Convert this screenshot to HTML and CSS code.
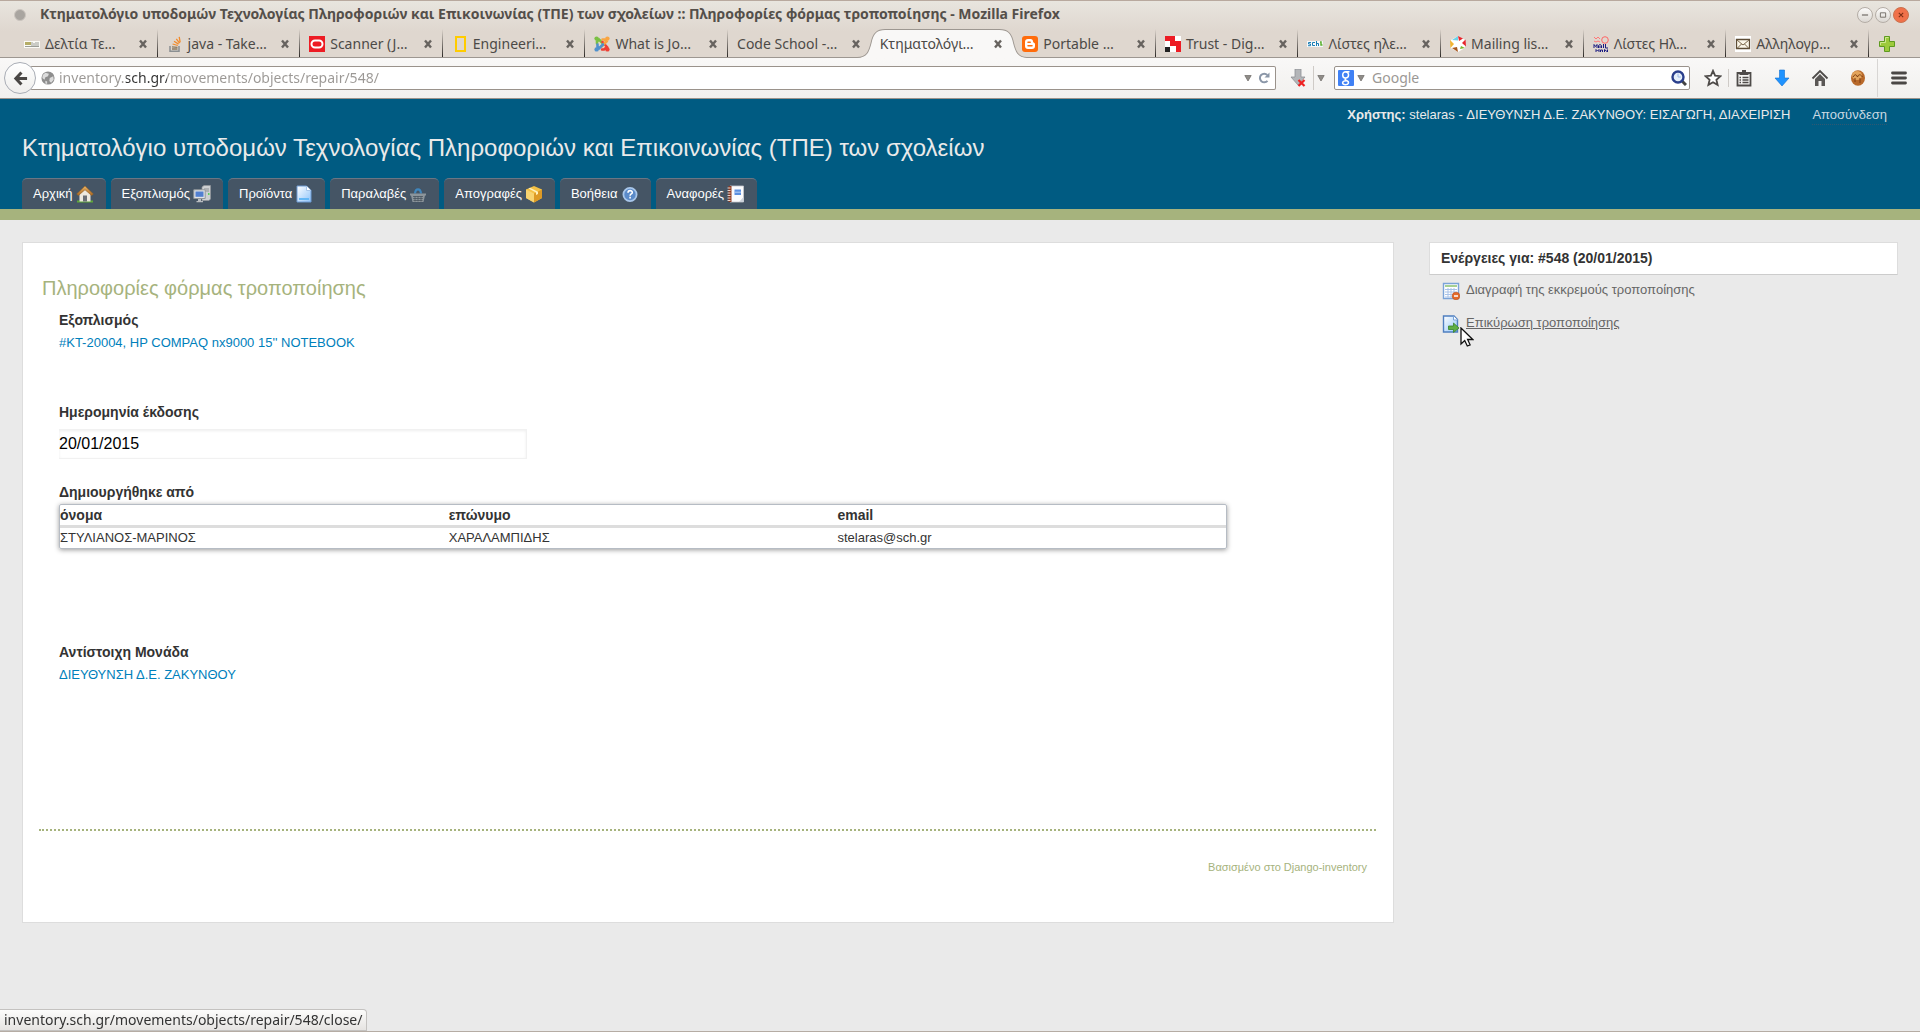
FILE: index.html
```html
<!DOCTYPE html>
<html lang="el">
<head>
<meta charset="utf-8">
<title>Κτηματολόγιο υποδομών Τεχνολογίας Πληροφοριών και Επικοινωνίας (ΤΠΕ) των σχολείων :: Πληροφορίες φόρμας τροποποίησης</title>
<link rel="stylesheet" href="styles.css">
</head>
<body>
<svg class="defs" aria-hidden="true">
  <defs>
    <symbol id="i-close" viewBox="0 0 10 10"><path d="M2 1.500 8 8.500M8 1.500 2 8.500" stroke="#67635f" stroke-width="2.400" fill="none"/></symbol>
    <symbol id="i-drop" viewBox="0 0 8 8"><path d="M.8 1.500h6.400L4 7z" fill="#8f8c88" stroke="#6b6865" stroke-width=".7"/></symbol>
    <linearGradient id="g-sheet" x1="0" y1="0" x2="1" y2="1"><stop offset="0" stop-color="#fff"/><stop offset="1" stop-color="#8fc4fa"/></linearGradient>
    <linearGradient id="g-roof" x1="0" y1="0" x2="0" y2="1"><stop offset="0" stop-color="#e9b568"/><stop offset="1" stop-color="#a8651f"/></linearGradient>
  </defs>
</svg>

<header class="chrome">
  <div class="titlebar">
    <span class="led"></span>
    <span class="wtitle">Κτηματολόγιο υποδομών Τεχνολογίας Πληροφοριών και Επικοινωνίας (ΤΠΕ) των σχολείων :: Πληροφορίες φόρμας τροποποίησης - Mozilla Firefox</span>
    <div class="wbuttons">
      <button class="wbtn" aria-label="Minimize"><svg viewBox="0 0 16 16"><path d="M4.500 8h7" stroke="#6a655f" stroke-width="1.300"/></svg></button>
      <button class="wbtn" aria-label="Maximize"><svg viewBox="0 0 16 16"><path d="M5 5.500h6v5H5z" stroke="#6a655f" fill="none"/></svg></button>
      <button class="wbtn wbtn-close" aria-label="Close"><svg viewBox="0 0 16 16"><path d="m5.500 5.500 5 5m0-5-5 5" stroke="#7a2d14" stroke-width="1.200"/></svg></button>
    </div>
  </div>

  <div class="tabs">
    <div class="tab"><svg class="ico" viewBox="0 0 16 16"><path fill="#fafaf5" d="M0 5h16v7H0z"/><path fill="#b5ad67" d="M1 6h6v3H1z"/><path stroke="#9b9d97" d="M1 10.500h14M8 6v4m2-3v3m2-4v4m2-4v4"/></svg><span class="tlabel">Δελτία Τε…</span><button class="x" aria-label="Close tab"><svg><use href="#i-close"/></svg></button></div>
    <div class="tab"><svg class="ico" viewBox="0 0 16 16"><path d="M3 10v5.200h9V10" fill="none" stroke="#8a8f92" stroke-width="1.500"/><path d="M5 13h5.500M5 10.800l5.500.6" stroke="#8a7a62" stroke-width="1.300"/><path d="m5.600 8 5.200 1.500M7 5.300l4.600 2.800M9.300 2.800l3.300 4.300M12.200.8l1 5.600" stroke="#f28b2c" stroke-width="1.300"/></svg><span class="tlabel">java - Take…</span><button class="x" aria-label="Close tab"><svg><use href="#i-close"/></svg></button></div>
    <div class="tab"><svg class="ico" viewBox="0 0 16 16"><path fill="#ed1c24" d="M0 0h16v16H0z"/><rect x="2.500" y="4.500" width="11" height="7" rx="3.500" fill="none" stroke="#fff" stroke-width="2"/></svg><span class="tlabel">Scanner (J…</span><button class="x" aria-label="Close tab"><svg><use href="#i-close"/></svg></button></div>
    <div class="tab"><svg class="ico" viewBox="0 0 16 16"><path d="M4 1h9v14H4z" fill="none" stroke="#fc0" stroke-width="2"/></svg><span class="tlabel">Engineeri…</span><button class="x" aria-label="Close tab"><svg><use href="#i-close"/></svg></button></div>
    <div class="tab"><svg class="ico" viewBox="0 0 16 16"><g fill="none" stroke-width="2.600" stroke-linecap="round"><path d="M3 7.500V5.500L5 3.500 10 8.500" stroke="#7ac043"/><path d="M7.500 13h2L12.500 10.500 8 5.500" stroke="#ee4035" transform="translate(.5 .5)"/><path d="M8.500 3.500h2L12.500 5.500 7.500 10.500" stroke="#f9a541"/><path d="M3.500 8.500v2.500L5 12.500 9 8.500" stroke="#5091cd"/></g><circle cx="2.600" cy="2.600" r="2.200" fill="#7ac043"/><circle cx="13.400" cy="2.600" r="2.200" fill="#f9a541"/><circle cx="2.600" cy="13.400" r="2.200" fill="#5091cd"/><circle cx="13.400" cy="13.400" r="2.200" fill="#ee4035"/></svg><span class="tlabel">What is Jo…</span><button class="x" aria-label="Close tab"><svg><use href="#i-close"/></svg></button></div>
    <div class="tab tab-plain"><span class="tlabel">Code School -…</span><button class="x" aria-label="Close tab"><svg><use href="#i-close"/></svg></button></div>
    <div class="tab tab-active"><svg class="shape" viewBox="0 0 170 29" preserveAspectRatio="none"><path d="M0 29V28.500C10 28.500 12 22 14 14 16 4 20 .5 28 .5H142C150 .5 154 4 156 14 158 22 160 28.500 170 28.500V29" fill="#f9f8f7" stroke="#9d9791"/></svg><span class="tlabel">Κτηματολόγι…</span><button class="x" aria-label="Close tab"><svg><use href="#i-close"/></svg></button></div>
    <div class="tab"><svg class="ico" viewBox="0 0 16 16"><rect width="16" height="16" rx="3" fill="#ff6c0c"/><path d="M6 3h2.500A2.500 2.500 0 0 1 11 5.500C11 7 13 6.500 13 8v2a3 3 0 0 1-3 3H6a3 3 0 0 1-3-3V6a3 3 0 0 1 3-3z" fill="#fff"/><path d="M6 6.200h2.200M6 9.800h4" stroke="#ff6c0c" stroke-width="1.500" stroke-linecap="round"/></svg><span class="tlabel">Portable …</span><button class="x" aria-label="Close tab"><svg><use href="#i-close"/></svg></button></div>
    <div class="tab"><svg class="ico" viewBox="0 0 16 16"><path fill="#fff" d="M0 0h16v16H0z"/><path fill="#ed1c24" d="M0 0h10v5h6v11h-5v-6H5V5H0z"/><path fill="#222" d="M0 11h5v5H0z"/></svg><span class="tlabel">Trust - Dig…</span><button class="x" aria-label="Close tab"><svg><use href="#i-close"/></svg></button></div>
    <div class="tab"><svg class="ico" viewBox="0 0 16 16"><path fill="#f6f8f9" d="M0 5h16v6H0z"/><path d="M4 6.500H1.500v1.500H3.500v1.700H1M8 6.500H5.500v3H8M9.500 5v5m0-2.500h2V10" stroke="#1a7eb5" fill="none"/><path d="M13 6h1v3h1.500" stroke="#5bb030" stroke-width="1.500" fill="none"/></svg><span class="tlabel">Λίστες ηλε…</span><button class="x" aria-label="Close tab"><svg><use href="#i-close"/></svg></button></div>
    <div class="tab"><svg class="ico" viewBox="0 0 16 16"><path fill="#fff" d="m8 0 7 4v8l-7 4-7-4V4z"/><path fill="#e8262e" d="m8 0 5 2.500L9 5z"/><path fill="#6cd3e8" d="M8 0v4.500L2 4z"/><path fill="#f3b431" d="m0 4 4 4-3.500 4z"/><path fill="#e8262e" d="m15.500 3.500.5 7L12 7z"/><path fill="#7ab82e" d="m15 12-5 1 1-3z"/><path fill="#a8561c" d="m2 12 5-1 1 5z"/></svg><span class="tlabel">Mailing lis…</span><button class="x" aria-label="Close tab"><svg><use href="#i-close"/></svg></button></div>
    <div class="tab"><svg class="ico" viewBox="0 0 16 16" fill="none"><path d="m1 1 2 2 2-2 2 2M1 5l2 1 2-1 2 1" stroke="#f77"/><circle cx="12" cy="4" r="3.300" stroke="#f66"/><path d="M1 12V8.500l1.500 2L4 8.500V12m1.500 0V9.500L7 8.500l1.500 1V12m-3-1h3M10.500 8v4m2-4v4H15M3 16v-2.500l1.500 1.500L6 13.500V16m1.500 0v-2h2v2m2 0v-2.500l3 2.500v-2.500" stroke="#1a1a80"/></svg><span class="tlabel">Λίστες Ηλ…</span><button class="x" aria-label="Close tab"><svg><use href="#i-close"/></svg></button></div>
    <div class="tab"><svg class="ico" viewBox="0 0 16 16"><path fill="#fff" d="M0 0h16v16H0z"/><path d="M1.500 3.500h13v9h-13z" fill="#fbf6e8" stroke="#5d4c35" stroke-width="1.300"/><path d="m2 4 6 5 6-5M2 12.500 6.500 8M14 12.500 9.500 8" stroke="#7a664a" fill="none"/></svg><span class="tlabel">Αλληλογρ…</span><button class="x" aria-label="Close tab"><svg><use href="#i-close"/></svg></button></div>
    <button class="newtab" aria-label="New tab"><svg class="ico" viewBox="0 0 16 16"><path d="M5.500.5h5v5h5v5h-5v5h-5v-5h-5v-5h5z" fill="#9dca3c" stroke="#5e9a20"/><path d="M6.500 6.500v-5h3M1.500 9V6.500h5" stroke="#cfe990" fill="none"/></svg></button>
  </div>

  <div class="toolbar">
    <button class="back" aria-label="Back"><svg viewBox="0 0 16 16"><path d="M9 1.500 3 8l6 6.500M3.500 8H15" stroke="#4a4745" stroke-width="3.200" fill="none"/></svg></button>
    <div class="urlbar">
      <svg class="globe" viewBox="0 0 16 16"><circle cx="8" cy="8" r="7.500" fill="#8e8e8e"/><path d="M2 4.500 5 2l4 1-1 3-3 1-1 3-2.500-2zM10 8l4-2 .5 4-3 3.500-2-2zM5 11l2 1v2.500H5z" fill="#dcdcdc"/></svg>
      <input class="url" type="text" value="inventory.sch.gr/movements/objects/repair/548/" aria-label="Address">
      <svg class="drop"><use href="#i-drop"/></svg>
      <button class="plain" aria-label="Reload"><svg class="ico12" viewBox="0 0 12 12"><path d="M9.500 8.800A4.300 4.300 0 1 1 9.300 3" fill="none" stroke="#8b97a8" stroke-width="2"/><path d="M11.500.5v5h-5z" fill="#8b97a8"/></svg></button>
    </div>
    <button class="plain dl" aria-label="Downloads"><svg class="ico18" viewBox="0 0 18 18"><path d="M6 0h6v8h4l-7 8-7-8h4z" fill="#b3b5b8" stroke="#8e9094" stroke-width=".8"/><path d="m9.500 11 6 6m0-6-6 6" stroke="#e22" stroke-width="2.200"/></svg></button>
    <button class="plain dropbtn" aria-label="More"><svg class="drop"><use href="#i-drop"/></svg></button>
    <div class="search">
      <svg class="ico" viewBox="0 0 16 16"><rect width="16" height="16" rx="1" fill="#4081f5"/><path d="M11.500 1.800H7.800C3.500 1.800 4 8 7.500 8c4 0 4-6 .3-6M8 8c-1.500.8-1 1.800.4 2.500 3.600 1.600 2 4.200-.9 4.200-4 0-4-4 1-4" fill="none" stroke="#fff" stroke-width="1.500"/></svg>
      <svg class="drop"><use href="#i-drop"/></svg>
      <input class="q" type="text" placeholder="Google" aria-label="Search">
      <button class="plain" aria-label="Go"><svg class="ico" viewBox="0 0 16 16"><path d="m11 11 4 4" stroke="#444" stroke-width="3"/><circle cx="7" cy="7" r="5.500" fill="#e5effa" stroke="#2a3f8c" stroke-width="2.400"/><path d="M7 3.500V7h3" stroke="#9db8e6" fill="none"/></svg></button>
    </div>
    <div class="tools">
      <button class="plain" aria-label="Bookmark"><svg class="ico18" viewBox="0 0 18 18"><path d="m9 1.800 2.100 4.900 5.300.5-4 3.500 1.200 5.200L9 13.200l-4.600 2.700 1.200-5.200-4-3.500 5.300-.5z" fill="#fff" stroke="#4e4b49" stroke-width="1.800"/></svg></button>
      <span class="vsep"></span>
      <button class="plain" aria-label="Bookmarks list"><svg class="ico18" viewBox="0 0 18 18"><path d="M2.500 4h13v12.500h-13z" fill="none" stroke="#4e4b49" stroke-width="1.800"/><path d="M4.500 3h2.500V1h4v2h2.500v3h-9z" fill="#4e4b49"/><path d="M4.500 8.500H6M7.500 8.500h6M4.500 11H6m1.500 0h6M4.500 13.500H6m1.500 0h6" stroke="#4e4b49" stroke-width="1.300"/></svg></button>
      <button class="plain" aria-label="Download progress"><svg class="ico18" viewBox="0 0 18 18"><path d="M6.500 1h5v8h4.500L9 17 2 9h4.500z" fill="#1f93ff" stroke="#0f6fd0" stroke-width=".6"/></svg></button>
      <button class="plain" aria-label="Home"><svg class="ico18" viewBox="0 0 18 18"><path d="M1.500 9.500 9 2l7.500 7.500" fill="none" stroke="#4e4b49" stroke-width="1.800"/><path d="M4 10 9 5l5 5v7h-3.500v-5h-3v5H4z" fill="#5a5755"/></svg></button>
      <button class="plain" aria-label="Cookies"><svg class="ico18" viewBox="0 0 18 18"><ellipse cx="9" cy="9" rx="7" ry="7.800" fill="#b8692a"/><ellipse cx="8" cy="6.500" rx="5" ry="4.500" fill="#e3a45c"/><path d="M4 8c2-3 3-3 4.500 0 1-3 3-3 5 0M6 13V9m5 5V9" stroke="#7d3d10" fill="none"/></svg></button>
      <span class="vsep vsep-tall"></span>
      <button class="plain" aria-label="Menu"><svg class="ico18" viewBox="0 0 18 18"><path d="M2.500 4h13M2.500 9h13M2.500 14h13" stroke="#4a4745" stroke-width="2.800" stroke-linecap="round"/></svg></button>
    </div>
  </div>
</header>

<div class="site-head">
  <p class="user"><span><b>Χρήστης:</b> stelaras - ΔΙΕΥΘΥΝΣΗ Δ.Ε. ΖΑΚΥΝΘΟΥ: ΕΙΣΑΓΩΓΗ, ΔΙΑΧΕΙΡΙΣΗ</span><a class="logout" href="#">Αποσύνδεση</a></p>
  <h1>Κτηματολόγιο υποδομών Τεχνολογίας Πληροφοριών και Επικοινωνίας (ΤΠΕ) των σχολείων</h1>
  <nav class="menu">
    <a href="#">Αρχική<svg class="mico" viewBox="0 0 18 18"><path d="M1 15.500h16v2H1z" fill="#5fa83a"/><path d="M3.500 9 9 4l5.500 5v7.500h-11z" fill="#eee9df"/><path d="M7 10.500h4v6H7z" fill="#6b6f76"/><path d="m9 1 8.300 8-1.700 1.500L9 4.800 2.400 10.500.7 9z" fill="url(#g-roof)" stroke="#9a6425" stroke-width=".6"/></svg></a>
    <a href="#">Εξοπλισμός<svg class="mico" viewBox="0 0 18 18"><path d="m9 2 2-1.500h6.500V14L16 15.500H9z" fill="#cdd0d2" stroke="#92979b" stroke-width=".7"/><path d="M11 4h5m-5 2h5" stroke="#8b9094"/><path d="M15 9h1.500" stroke="#3c3" stroke-width="1.600"/><path d="M.8 4.800h11.400v8.700H.8z" fill="#dfe2e5" stroke="#92979b"/><path d="M2.500 6.500h8v5.300h-8z" fill="#517fd0"/><path d="M5 14h3v2h2v1.200H3.500V16H5z" fill="#b8bcc0"/></svg></a>
    <a href="#">Προϊόντα<svg class="mico" viewBox="0 0 18 18"><path d="M2 1h9.500L16 5.500V17H2z" fill="url(#g-sheet)" stroke="#6d9bd4"/><path d="M11.500 1v4.500H16" fill="#fff" stroke="#a7c6ea"/><path d="M4 14h10" stroke="#65b8f6" stroke-width="2"/></svg></a>
    <a href="#">Παραλαβές<svg class="mico" viewBox="0 0 18 18"><path d="M6 8.500C6.500 3 11.500 3 12 8.500" stroke="#3f86bd" stroke-width="2.200" fill="none"/><path d="M1 8.500h16v2H16L14.500 17h-11L2 10.500H1z" fill="#8c959b"/><path d="M4 11.500h10M4.200 13.500h9.600M4.500 15.500h9M6 11v5.500M9 11v5.500m3-5.500v5.500" stroke="#4a5660" stroke-width=".8"/></svg></a>
    <a href="#">Απογραφές<svg class="mico" viewBox="0 0 18 18"><path d="m9 1 8 3.500V13l-8 4.500L1 13V4.500z" fill="#f4c144"/><path d="m1 4.500 8 4v9L1 13z" fill="#f8d470"/><path d="m9 8.500 8-4V13l-8 4.500z" fill="#dd9a25"/><path d="m5 2.800 8 4V9l-2 1V7.600L3.500 3.500z" fill="#fff1bd"/></svg></a>
    <a href="#">Βοήθεια<svg class="mico" viewBox="0 0 18 18"><circle cx="9" cy="9.500" r="6.600" fill="#5b8bc9" stroke="#a9c7ea" stroke-width="1.800"/><path d="M7 7.800c0-2.800 4.300-2.800 4.300-.4 0 1.600-2.200 1.500-2.200 3.300M9.100 11.700v1.700" stroke="#fff" stroke-width="1.600" fill="none"/></svg></a>
    <a href="#">Αναφορές<svg class="mico" viewBox="0 0 18 18"><path d="M3 1h13.500v16H3z" fill="#fbfbfd" stroke="#c6c8ce" stroke-width=".8"/><path d="M1.500 1h3v16h-3z" fill="#8f3b22"/><path d="M.5 3h3m-3 2.500h3M.5 8h3m-3 2.500h3M.5 13h3m-3 2.500h3" stroke="#e3d2ca"/><path d="M7.500 4.500h6.500V10H7.500z" fill="#5b8fe0"/><path d="M7.500 7.200H14" stroke="#b9d0f4"/><path d="m12 17 4.500-5v5z" fill="#cdd3dc"/></svg></a>
  </nav>
</div>

<div class="content">
  <main class="card">
    <h2>Πληροφορίες φόρμας τροποποίησης</h2>
    <div class="fields">
      <section class="field field-wide">
        <h3>Εξοπλισμός</h3>
        <a href="#">#KT-20004, HP COMPAQ nx9000 15'' NOTEBOOK</a>
      </section>
      <section class="field field-date">
        <label for="issued">Ημερομηνία έκδοσης</label>
        <input id="issued" type="text" value="20/01/2015">
      </section>
      <section class="field field-table">
        <h3>Δημιουργήθηκε από</h3>
        <table>
          <thead><tr><th>όνομα</th><th>επώνυμο</th><th>email</th></tr></thead>
          <tbody><tr><td>ΣΤΥΛΙΑΝΟΣ-ΜΑΡΙΝΟΣ</td><td>ΧΑΡΑΛΑΜΠΙΔΗΣ</td><td>stelaras@sch.gr</td></tr></tbody>
        </table>
      </section>
      <section class="field field-unit">
        <h3>Αντίστοιχη Μονάδα</h3>
        <a href="#">ΔΙΕΥΘΥΝΣΗ Δ.Ε. ΖΑΚΥΝΘΟΥ</a>
      </section>
    </div>
    <footer class="foot">Βασισμένο στο Django-inventory</footer>
  </main>

  <aside class="side">
    <h3 class="side-head">Ενέργειες για: #548 (20/01/2015)</h3>
    <ul>
      <li><a href="#"><svg class="sico" viewBox="0 0 18 18"><path d="M1.500 1.500h15v15h-15z" fill="#fff" stroke="#7ba4d8" stroke-width="1.400"/><path d="M3 4h12" stroke="#9ccb86" stroke-width="1.800"/><path d="M3 7.500h12m-12 2.500h12M3 12.500h9M3 15h9M6 6v9.500M9 6v9.500m3-9.500v8" stroke="#a9c3e8"/><circle cx="14" cy="14" r="3.800" fill="#e4692a" stroke="#b94d17" stroke-width=".6"/><path d="M12 14h4" stroke="#fff" stroke-width="1.500"/></svg><span>Διαγραφή της εκκρεμούς τροποποίησης</span></a></li>
      <li><a class="hovered" href="#"><svg class="sico" viewBox="0 0 18 18"><path d="M1.500 1H12L15.500 4.500v12.500h-14z" fill="url(#g-sheet)" stroke="#4f7fc0" stroke-width="1.400"/><path d="M11.500 1v4h4" fill="#fff" stroke="#7ba4d8"/><path d="M6.500 11h5V8l5.500 5-5.500 4.500v-3h-5z" fill="#5fae45" stroke="#39842a" stroke-width=".8"/></svg><span>Επικύρωση τροποποίησης</span></a><svg class="pointer" viewBox="0 0 14 20"><path d="M1 1v16l3.700-3.500L7.300 19l2.800-1.200L7.600 12.500h5.200z" fill="#fff" stroke="#111" stroke-width="1.300"/></svg></li>
    </ul>
  </aside>
</div>

<div class="status">inventory.sch.gr/movements/objects/repair/548/close/</div>
</body>
</html>
```
FILE: styles.css
```css
* { box-sizing: border-box; }

body {
  margin: 0;
  min-height: 100vh;
  background: #eaeaea;
  border-bottom: 1px solid #b5aca4;
  color: #333;
  font: 13px/18px "Liberation Sans", Arial, sans-serif;
}

h1, h2, h3, p, ul { margin: 0; padding: 0; font-weight: normal; }
ul { list-style: none; }
a { color: #0080bb; text-decoration: none; }
svg { display: block; flex: none; }
button { padding: 0; border: 0; background: none; flex: none; }
.defs { position: absolute; width: 0; height: 0; }

/* Browser window */
.chrome {
  background: linear-gradient(#e8e5de, #dfd7cf 30px);
  border-top: 1px solid #b8a99e;
  border-bottom: 1px solid #9a928b;
  color: #4c4a47;
  font: 14px/20px "Noto Sans", "Open Sans", sans-serif;
}

.titlebar {
  display: flex;
  align-items: center;
  height: 28px;
  padding: 0 11px 0 14px;
}
.led {
  width: 12px;
  height: 12px;
  margin-right: 14px;
  border: 1px solid #cbc5bf;
  border-radius: 50%;
  background: #a9a5a0;
}
.wtitle { flex: 1; padding-bottom: 2px; font-weight: bold; color: #544f4a; white-space: nowrap; overflow: hidden; }
.wbuttons { display: flex; gap: 2px; }
.wbtn {
  width: 16px;
  height: 16px;
  border: 1px solid #b4ada6;
  border-radius: 50%;
  background: linear-gradient(#fbfaf9, #dcd8d3);
}
.wbtn svg { width: 14px; height: 14px; }
.wbtn-close { background: #f0714a; border-color: #c9724f; }

.tabs {
  display: flex;
  height: 29px;
  padding-left: 15px;
  border-bottom: 1px solid #9d9791;
}
.tab {
  position: relative;
  flex: 1;
  min-width: 0;
  display: flex;
  align-items: center;
  gap: 5px;
  padding: 2px 10px 0 9px;
  background: linear-gradient(transparent, #2b2825) right / 1px 100% no-repeat;
}
.tab-plain, .tab-active { background: none; }
.shape { position: absolute; left: -14px; right: -14px; top: 0; width: calc(100% + 28px); height: 29px; }
.tlabel { position: relative; flex: 1; white-space: nowrap; }
.x { position: relative; width: 10px; height: 10px; }
.x svg { width: 10px; height: 10px; }
.ico { width: 16px; height: 16px; }
.ico12 { width: 12px; height: 12px; }
.ico18 { width: 18px; height: 18px; }
.drop { width: 8px; height: 8px; }
.newtab { width: 51px; padding: 2px 0 0 10px; }

.toolbar {
  display: flex;
  align-items: center;
  height: 40px;
  padding: 0 12px 0 4px;
  background: linear-gradient(#f9f8f7, #f1f0ee);
}
.back {
  position: relative;
  display: grid;
  place-items: center;
  width: 32px;
  height: 32px;
  border: 1px solid #a9adb5;
  border-radius: 50%;
  background: linear-gradient(#fff, #efeeec);
}
.back svg { width: 15px; height: 15px; }
.urlbar, .search {
  display: flex;
  align-items: center;
  height: 24px;
  border: 1px solid #9a928b;
  border-radius: 2px;
  background: #fff;
}
.urlbar { flex: 1; margin-left: -6px; padding: 0 5px 0 11px; gap: 6px; border-left: 0; }
.globe { width: 14px; height: 14px; }
.url, .q {
  flex: 1;
  min-width: 0;
  padding: 0;
  border: 0;
  outline: 0;
  font: inherit;
}
.url {
  margin-left: -2px;
  color: transparent;
  background: linear-gradient(90deg, #9b9895 67px, #333 67px 108px, #9b9895 108px) text;
}
.q { margin-left: 4px; background: none; color: #333; }
.q::placeholder { color: #9b9895; opacity: 1; }
.dl { margin: 0 6px 0 13px; }
.dropbtn { padding: 8px 9px 8px 3px; border-left: 1px solid #cfcbc7; }
.search { width: 356px; padding: 0 2px 0 3px; gap: 3px; }
.tools { display: flex; align-items: center; gap: 20px; padding-left: 14px; }
.vsep { width: 1px; height: 18px; margin: 0 -14px 0 -14px; background: #cfcbc7; }
.vsep-tall { height: 38px; margin: 0 -8px 0 -10px; background: #d8d6d4; }

/* Site header */
.site-head {
  padding: 7px 22px 0;
  background: #005b82;
  border-bottom: 11px solid #a6b37d;
  color: #eaeaea;
}
.user { display: flex; justify-content: flex-end; gap: 22px; padding-right: 11px; }
.logout { color: #c9d9e2; border-bottom: 1px dotted #2f5872; }
h1 { margin-top: 8px; font-size: 24px; line-height: 30px; }
.menu { display: flex; gap: 5px; margin-top: 15px; }
.menu a {
  display: flex;
  align-items: center;
  gap: 3px;
  height: 31px;
  padding: 0 12px 0 11px;
  border-top: 1px solid #6a7684;
  border-radius: 5px 5px 0 0;
  background: #455565;
  color: #fff;
}
.mico { width: 18px; height: 18px; }

/* Page body */
.content {
  display: grid;
  grid-template-columns: 1372fr 469fr;
  gap: 35px;
  align-items: start;
  padding: 22px 22px 0;
}
.card { padding: 33px 17px 46px 16px; background: #fff; border: 1px solid #ddd; }
h2 { padding-left: 3px; color: #a6b37d; font-size: 20px; line-height: 24px; }
.fields { padding: 10px 0 0 20px; }
h3, label { display: block; font-size: 14px; line-height: 20px; font-weight: bold; }
.field > a { display: block; padding-top: 1px; line-height: 24px; }
.field-wide { min-height: 92px; }
.field-date { min-height: 80px; }
.field-table { min-height: 160px; }
.field-unit { min-height: 187px; }
.field-date input {
  display: block;
  width: 35.5%;
  height: 30px;
  margin-top: 7px;
  padding: 0;
  border: 1px solid #f1f1f1;
  border-left: 0;
  box-shadow: inset 0 1px 3px #eee;
  background: #fff;
  color: #000;
  font: 16px "Liberation Sans", Arial, sans-serif;
}
table {
  width: 88.7%;
  margin-top: 2px;
  table-layout: fixed;
  border-spacing: 0;
  border: 1px solid #b6bcc4;
  border-radius: 2px;
  box-shadow: 0 1px 5px #999;
}
th, td { padding: 0; text-align: left; line-height: 20px; }
th { font-size: 14px; border-bottom: 3px solid #ddd; }
.foot {
  padding: 27px 9px 0 0;
  border-top: 2px dotted #a6b37d;
  color: #a6b37d;
  font-size: 11px;
  text-align: right;
}

.side-head { padding: 5px 11px 6px; background: #fff; border: 1px solid #ddd; border-bottom-color: #ccc; }
.side ul { padding: 5px 0 0 13px; display: grid; gap: 11px; }
.side li { position: relative; }
.side a { display: flex; align-items: center; gap: 6px; color: #666; line-height: 22px; }
.side a span { padding-bottom: 2px; line-height: 20px; }
.side .hovered { text-decoration: underline; }
.sico { width: 18px; height: 18px; }
.pointer { position: absolute; left: 18px; top: 14px; width: 14px; height: 20px; }

/* Link target shown while hovering */
.status {
  position: fixed;
  left: 0;
  bottom: 1px;
  padding: 0 4px;
  border: 1px solid #c4c2c0;
  border-left: 0;
  border-radius: 0 4px 0 0;
  background: linear-gradient(#fcfcfb, #e6e4e2);
  color: #333;
  font: 14px/20px "Noto Sans", "Open Sans", sans-serif;
}
```
